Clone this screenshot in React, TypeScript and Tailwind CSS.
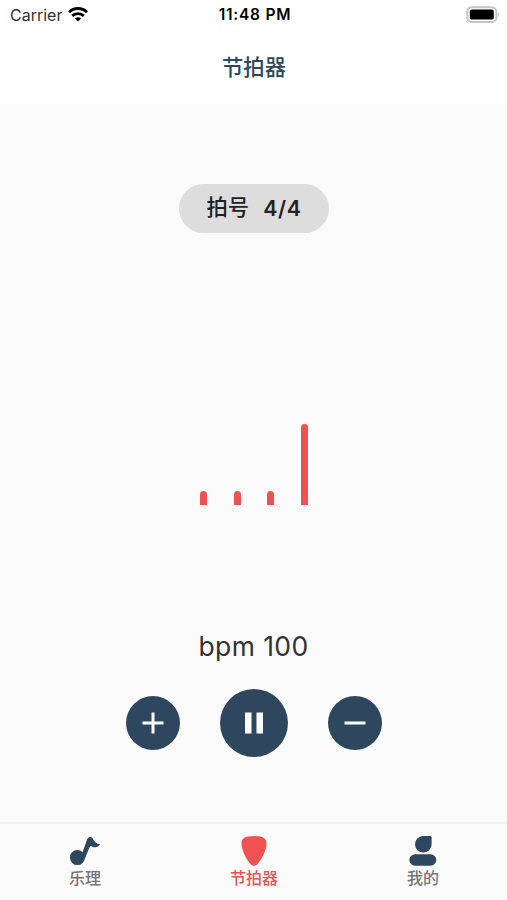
import { useState } from "react";

const beats = [14, 14, 14, 81];

const MusicIcon = () => (
    <svg width="32" height="30" viewBox="0 0 32 30" fill="currentColor">
        <circle cx="8.4" cy="21.6" r="7.5" />
        <path d="M12.2 20 L17.8 4.2 C19 0.6 22.2 0 24 3 C25.6 5.8 27.6 7.8 31 8.3 C29.4 11.4 25.8 12 22.8 10.4 C21.6 9.8 21 10 20.6 11.2 L15.8 22.8 Z" />
    </svg>
);

const PickIcon = () => (
    <svg width="32" height="30" viewBox="0 0 32 30" fill="currentColor">
        <path d="M16 0.1 C20.6 0.1 24.6 0.9 26.6 2.5 C28.4 4 28.8 6.6 28.3 9.8 C27.2 16.2 24 22.8 20 27.4 C17.4 30.4 14.6 30.4 12 27.4 C8 22.8 4.8 16.2 3.7 9.8 C3.2 6.6 3.6 4 5.4 2.5 C7.4 0.9 11.4 0.1 16 0.1 Z" />
    </svg>
);

const UserIcon = () => (
    <svg width="32" height="30" viewBox="0 0 32 30" fill="currentColor">
        <path d="M16 0 H23.5 Q24.6 0 24.6 1.1 V8.3 A8.3 8.3 0 1 1 16 0 Z" />
        <rect x="2.3" y="18.2" width="27" height="11.6" rx="5.8" />
    </svg>
);

const tabs = [
    { label: "乐理", icon: <MusicIcon /> },
    { label: "节拍器", icon: <PickIcon /> },
    { label: "我的", icon: <UserIcon /> }
];

const StatusBar = () => (
    <div className="w-full h-[30px] grid grid-cols-3 items-center pl-2.5 pr-[7px] text-black">
        <div className="flex items-center gap-x-[6px]">
            <span className="text-[16px] leading-5 text-[#333333]">Carrier</span>
            <svg className="-mt-0.5" width="20" height="15" viewBox="0 0 20 15" fill="none" stroke="currentColor" strokeWidth="2.9">
                <path d="M1 5.2 C6 0.2 14 0.2 19 5.2" />
                <path d="M4.2 8.9 C7.4 5.8 12.6 5.8 15.8 8.9" />
                <path d="M10 14.6 L6.9 11.6 C8.6 9.9 11.4 9.9 13.1 11.6 Z" fill="currentColor" stroke="none" />
            </svg>
        </div>
        <span className="text-[15.5px] font-semibold tracking-[0.75px] text-center whitespace-nowrap">11:48 PM</span>
        <svg className="justify-self-end -mt-0.5" width="34" height="17" viewBox="0 0 34 17">
            <rect x="1.3" y="1.2" width="29" height="14.8" rx="4.5" fill="#ffffff" stroke="#c4c4c4" strokeWidth="2" />
            <rect x="3.8" y="3.5" width="24" height="10" rx="2" fill="#000000" />
            <path d="M31.8 6.2 C33.4 7 33.4 10 31.8 10.8 Z" fill="#bcbcbc" />
        </svg>
    </div>
);

const App = () => {

    const [bpm, setBpm] = useState<number>(100);

    const [playing, setPlaying] = useState<boolean>(true);

    const [activeTab, setActiveTab] = useState<number>(1);

    return (
        <div className="w-full h-screen flex flex-col bg-[#fafafa] font-['Inter','Noto_Sans_CJK_SC',sans-serif] overflow-hidden">
            <header className="w-full h-[104px] shrink-0 bg-white">
                <StatusBar />
                <h1 className="h-[75px] pl-px flex items-center justify-center text-[21.3px] font-medium text-[#2e475f]">节拍器</h1>
            </header>

            <main className="w-full flex-1 flex flex-col items-center pt-20">
                <button className="w-[150px] h-[49px] shrink-0 flex items-center justify-center gap-x-[14px] pl-px bg-[#dddddd] rounded-full text-[21.3px] font-medium text-[#222222]">
                    <span className="pb-0.5">拍号</span>
                    <span className="font-semibold tracking-[0.6px]">4/4</span>
                </button>

                <div className="h-[272px] shrink-0 pl-px flex items-end gap-x-[26.8px]">
                    {beats.map((height, index) => (
                        <div key={index} className="w-[7px] bg-[#ee5253] rounded-t-full" style={{ height }} />
                    ))}
                </div>

                <p className="mt-[121px] h-10 leading-10 text-[26.5px] tracking-[0.4px] text-[#333333] whitespace-nowrap">bpm {bpm}</p>

                <div className="mt-[23px] flex items-center gap-x-10 text-white">
                    <button onClick={() => setBpm(bpm + 1)} className="w-[54px] h-[54px] flex items-center justify-center bg-[#2e475f] rounded-full">
                        <svg width="22" height="22" viewBox="0 0 22 22" stroke="currentColor" strokeWidth="3">
                            <path d="M0.5 11 H21.5 M11 0.5 V21.5" />
                        </svg>
                    </button>
                    <button onClick={() => setPlaying(!playing)} className="w-[68px] h-[68px] flex items-center justify-center bg-[#2e475f] rounded-full">
                        <svg width="20" height="22" viewBox="0 0 20 22" fill="currentColor">
                            {playing ? <path d="M1 0.5 H7.5 V21.5 H1 Z M12.5 0.5 H19 V21.5 H12.5 Z" /> : <path d="M3 0 L20 11 L3 22 Z" />}
                        </svg>
                    </button>
                    <button onClick={() => setBpm(bpm - 1)} className="w-[54px] h-[54px] flex items-center justify-center bg-[#2e475f] rounded-full">
                        <svg width="22" height="22" viewBox="0 0 22 22" stroke="currentColor" strokeWidth="3">
                            <path d="M0.5 11 H21.5" />
                        </svg>
                    </button>
                </div>
            </main>

            <nav className="w-full h-[78px] shrink-0 grid grid-cols-3 border-t-2 border-[#f0f0f0]">
                {tabs.map((tab, index) => (
                    <button key={tab.label} onClick={() => setActiveTab(index)} className="flex flex-col items-center pt-3">
                        <span className={activeTab === index ? "text-[#ee5253]" : "text-[#2e475f]"}>{tab.icon}</span>
                        <span className={`mt-0.5 pl-px text-[16px] leading-5 font-medium ${activeTab === index ? "text-[#ee5253]" : "text-[#757575]"}`}>{tab.label}</span>
                    </button>
                ))}
            </nav>
        </div>
    );
}

export default App;
